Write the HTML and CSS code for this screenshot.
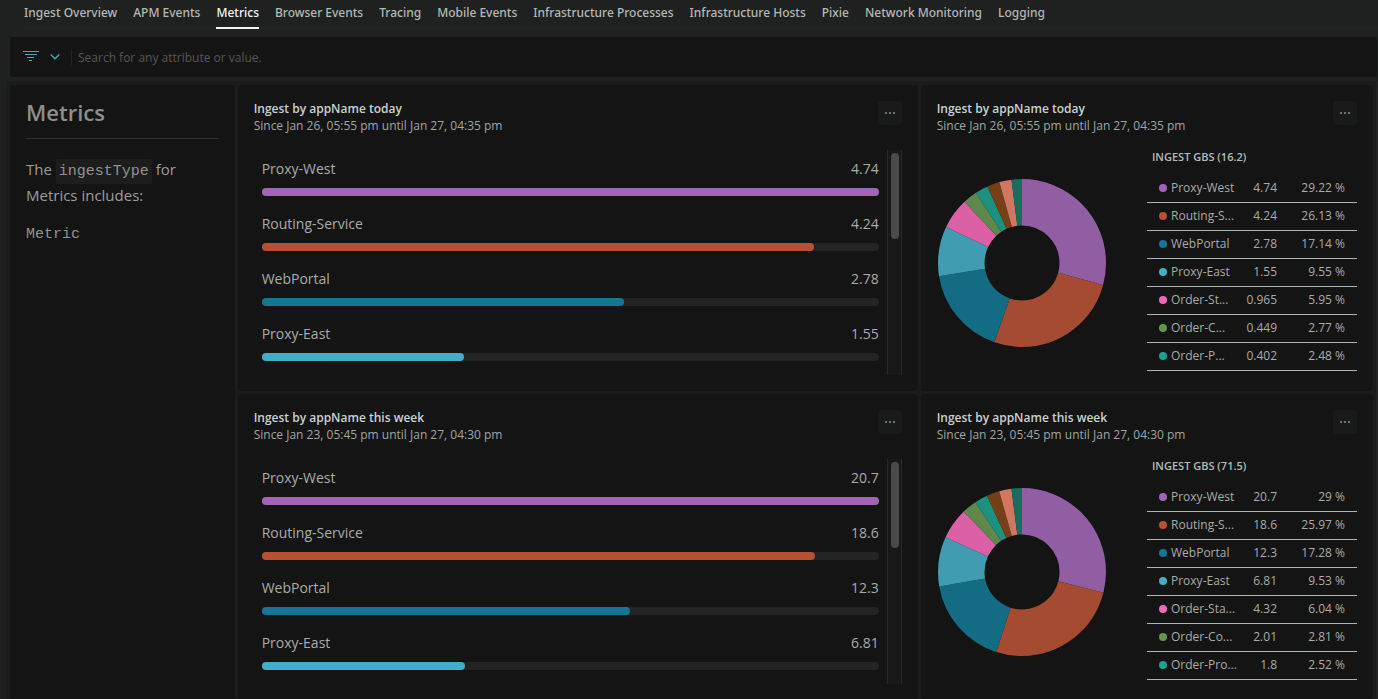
FILE: index.html
```html
<!DOCTYPE html>
<html lang="en">
<head>
<meta charset="utf-8">
<meta name="viewport" content="width=device-width, initial-scale=1">
<title>Metrics</title>
<link rel="stylesheet" href="styles.css">
</head>
<body>
<nav class="tabs" aria-label="Dashboard pages">
  <a class="tab" href="#overview">Ingest Overview</a>
  <a class="tab" href="#apm">APM Events</a>
  <a class="tab tab-active" href="#metrics" aria-current="page">Metrics</a>
  <a class="tab" href="#browser">Browser Events</a>
  <a class="tab" href="#tracing">Tracing</a>
  <a class="tab" href="#mobile">Mobile Events</a>
  <a class="tab" href="#processes">Infrastructure Processes</a>
  <a class="tab" href="#hosts">Infrastructure Hosts</a>
  <a class="tab" href="#pixie">Pixie</a>
  <a class="tab" href="#network">Network Monitoring</a>
  <a class="tab" href="#logging">Logging</a>
</nav>

<div class="search">
  <button class="filter" type="button" aria-label="Filter options">
    <svg width="16" height="12" viewBox="0 0 16 12"><path d="M0 .5h16M2 3.5h12M4 6.5h7M6 9.5h3"/></svg>
    <svg width="10" height="12" viewBox="0 0 10 12"><path class="chevron" d="M.7 3.5 5 7.8l4.3-4.3"/></svg>
  </button>
  <input class="search-input" type="text" aria-label="Search" placeholder="Search for any attribute or value.">
</div>

<main class="board">
  <section class="card notes">
    <h1 class="notes-title">Metrics</h1>
    <p class="notes-text">The <code class="code">ingestType</code> for Metrics includes:</p>
    <p class="notes-type">Metric</p>
  </section>

  <section class="card wide">
    <header class="head">
      <div><h2 class="title">Ingest by appName today</h2><p class="range">Since Jan 26, 05:55 pm until Jan 27, 04:35 pm</p></div>
      <button class="more" type="button" aria-label="More options"><i></i><i></i><i></i></button>
    </header>
    <div class="body">
      <ul class="bars">
        <li class="bar"><span>Proxy-West</span><span>4.74</span><div class="track"><div class="fill purple" style="width:100%"></div></div></li>
        <li class="bar"><span>Routing-Service</span><span>4.24</span><div class="track"><div class="fill orange" style="width:89.5%"></div></div></li>
        <li class="bar"><span>WebPortal</span><span>2.78</span><div class="track"><div class="fill blue" style="width:58.7%"></div></div></li>
        <li class="bar"><span>Proxy-East</span><span>1.55</span><div class="track"><div class="fill cyan" style="width:32.8%"></div></div></li>
      </ul>
      <div class="scroll"><div class="thumb"></div></div>
    </div>
  </section>

  <section class="card side">
    <header class="head">
      <div><h2 class="title">Ingest by appName today</h2><p class="range">Since Jan 26, 05:55 pm until Jan 27, 04:35 pm</p></div>
      <button class="more" type="button" aria-label="More options"><i></i><i></i><i></i></button>
    </header>
    <div class="body pie">
      <svg class="donut" viewBox="0 0 170 170" role="img" aria-label="Ingest share by appName">
        <g transform="rotate(-90 85 85)">
          <circle cx="85" cy="85" r="60.75" pathLength="100" stroke="#915da3" stroke-dasharray="29.22 70.78"/>
          <circle cx="85" cy="85" r="60.75" pathLength="100" stroke="#a54b32" stroke-dasharray="26.13 73.87" stroke-dashoffset="-29.22"/>
          <circle cx="85" cy="85" r="60.75" pathLength="100" stroke="#146c84" stroke-dasharray="17.14 82.86" stroke-dashoffset="-55.35"/>
          <circle cx="85" cy="85" r="60.75" pathLength="100" stroke="#3f9cb1" stroke-dasharray="9.55 90.45" stroke-dashoffset="-72.49"/>
          <circle cx="85" cy="85" r="60.75" pathLength="100" stroke="#db60a6" stroke-dasharray="5.95 94.05" stroke-dashoffset="-82.04"/>
          <circle cx="85" cy="85" r="60.75" pathLength="100" stroke="#5e884c" stroke-dasharray="2.77 97.23" stroke-dashoffset="-87.99"/>
          <circle cx="85" cy="85" r="60.75" pathLength="100" stroke="#1c9180" stroke-dasharray="2.48 97.52" stroke-dashoffset="-90.76"/>
          <circle cx="85" cy="85" r="60.75" pathLength="100" stroke="#773f16" stroke-dasharray="2.4 97.6" stroke-dashoffset="-93.24"/>
          <circle cx="85" cy="85" r="60.75" pathLength="100" stroke="#cf7762" stroke-dasharray="2.34 97.66" stroke-dashoffset="-95.64"/>
          <circle cx="85" cy="85" r="60.75" pathLength="100" stroke="#166e5e" stroke-dasharray="2.02 97.98" stroke-dashoffset="-97.98"/>
        </g>
      </svg>
      <table class="legend">
        <caption>INGEST GBS (16.2)</caption>
        <tbody>
          <tr><th scope="row"><i class="dot purple"></i>Proxy-West</th><td>4.74</td><td>29.22 %</td></tr>
          <tr><th scope="row"><i class="dot orange"></i>Routing-S...</th><td>4.24</td><td>26.13 %</td></tr>
          <tr><th scope="row"><i class="dot blue"></i>WebPortal</th><td>2.78</td><td>17.14 %</td></tr>
          <tr><th scope="row"><i class="dot cyan"></i>Proxy-East</th><td>1.55</td><td>9.55 %</td></tr>
          <tr><th scope="row"><i class="dot pink"></i>Order-St...</th><td>0.965</td><td>5.95 %</td></tr>
          <tr><th scope="row"><i class="dot green"></i>Order-C...</th><td>0.449</td><td>2.77 %</td></tr>
          <tr><th scope="row"><i class="dot teal"></i>Order-P...</th><td>0.402</td><td>2.48 %</td></tr>
        </tbody>
      </table>
    </div>
  </section>

  <section class="card wide">
    <header class="head">
      <div><h2 class="title">Ingest by appName this week</h2><p class="range">Since Jan 23, 05:45 pm until Jan 27, 04:30 pm</p></div>
      <button class="more" type="button" aria-label="More options"><i></i><i></i><i></i></button>
    </header>
    <div class="body">
      <ul class="bars">
        <li class="bar"><span>Proxy-West</span><span>20.7</span><div class="track"><div class="fill purple" style="width:100%"></div></div></li>
        <li class="bar"><span>Routing-Service</span><span>18.6</span><div class="track"><div class="fill orange" style="width:89.7%"></div></div></li>
        <li class="bar"><span>WebPortal</span><span>12.3</span><div class="track"><div class="fill blue" style="width:59.7%"></div></div></li>
        <li class="bar"><span>Proxy-East</span><span>6.81</span><div class="track"><div class="fill cyan" style="width:32.9%"></div></div></li>
      </ul>
      <div class="scroll"><div class="thumb"></div></div>
    </div>
  </section>

  <section class="card side">
    <header class="head">
      <div><h2 class="title">Ingest by appName this week</h2><p class="range">Since Jan 23, 05:45 pm until Jan 27, 04:30 pm</p></div>
      <button class="more" type="button" aria-label="More options"><i></i><i></i><i></i></button>
    </header>
    <div class="body pie">
      <svg class="donut" viewBox="0 0 170 170" role="img" aria-label="Ingest share by appName">
        <g transform="rotate(-90 85 85)">
          <circle cx="85" cy="85" r="60.75" pathLength="100" stroke="#915da3" stroke-dasharray="29 71"/>
          <circle cx="85" cy="85" r="60.75" pathLength="100" stroke="#a54b32" stroke-dasharray="25.97 74.03" stroke-dashoffset="-29"/>
          <circle cx="85" cy="85" r="60.75" pathLength="100" stroke="#146c84" stroke-dasharray="17.28 82.72" stroke-dashoffset="-54.97"/>
          <circle cx="85" cy="85" r="60.75" pathLength="100" stroke="#3f9cb1" stroke-dasharray="9.53 90.47" stroke-dashoffset="-72.25"/>
          <circle cx="85" cy="85" r="60.75" pathLength="100" stroke="#db60a6" stroke-dasharray="6.04 93.96" stroke-dashoffset="-81.78"/>
          <circle cx="85" cy="85" r="60.75" pathLength="100" stroke="#5e884c" stroke-dasharray="2.81 97.19" stroke-dashoffset="-87.82"/>
          <circle cx="85" cy="85" r="60.75" pathLength="100" stroke="#1c9180" stroke-dasharray="2.52 97.48" stroke-dashoffset="-90.63"/>
          <circle cx="85" cy="85" r="60.75" pathLength="100" stroke="#773f16" stroke-dasharray="2.45 97.55" stroke-dashoffset="-93.15"/>
          <circle cx="85" cy="85" r="60.75" pathLength="100" stroke="#cf7762" stroke-dasharray="2.38 97.62" stroke-dashoffset="-95.6"/>
          <circle cx="85" cy="85" r="60.75" pathLength="100" stroke="#166e5e" stroke-dasharray="2.02 97.98" stroke-dashoffset="-97.98"/>
        </g>
      </svg>
      <table class="legend">
        <caption>INGEST GBS (71.5)</caption>
        <tbody>
          <tr><th scope="row"><i class="dot purple"></i>Proxy-West</th><td>20.7</td><td>29 %</td></tr>
          <tr><th scope="row"><i class="dot orange"></i>Routing-S...</th><td>18.6</td><td>25.97 %</td></tr>
          <tr><th scope="row"><i class="dot blue"></i>WebPortal</th><td>12.3</td><td>17.28 %</td></tr>
          <tr><th scope="row"><i class="dot cyan"></i>Proxy-East</th><td>6.81</td><td>9.53 %</td></tr>
          <tr><th scope="row"><i class="dot pink"></i>Order-Sta...</th><td>4.32</td><td>6.04 %</td></tr>
          <tr><th scope="row"><i class="dot green"></i>Order-Co...</th><td>2.01</td><td>2.81 %</td></tr>
          <tr><th scope="row"><i class="dot teal"></i>Order-Pro...</th><td>1.8</td><td>2.52 %</td></tr>
        </tbody>
      </table>
    </div>
  </section>
</main>
</body>
</html>
```

FILE: styles.css
```css
* { box-sizing: border-box; margin: 0; padding: 0; }

html { background: #1f2120; }

body {
  height: 100vh;
  overflow: hidden;
  color: #aaabaa;
  font: 12px/17px "Open Sans", "Noto Sans", sans-serif;
}

.tabs {
  display: flex;
  gap: 16px;
  margin-left: 24px;
  padding-top: 4px;
  border-bottom: 1px solid #222423;
  font-family: "Noto Sans", "Open Sans", sans-serif;
  font-weight: 500;
}

.tab {
  height: 25px;
  margin-bottom: -1px;
  color: #b5b8b7;
  text-decoration: none;
  white-space: nowrap;
}

.tab-active { color: #f1f4f4; border-bottom: 2px solid #f1f4f4; }

.search {
  display: flex;
  align-items: center;
  height: 40px;
  margin: 8px 1px 0 10px;
  border-radius: 2px 0 0 2px;
  background: #141414;
}

.filter {
  display: flex;
  align-items: center;
  gap: 11px;
  height: 16px;
  padding: 0 11px 0 13px;
  border: 0;
  border-right: 1px solid #232525;
  background: none;
}

.filter path { fill: none; stroke: #45abb8; }
.filter .chevron { stroke-width: 1.3; }

.search-input {
  flex: 1;
  height: 100%;
  padding-left: 6px;
  border: 0;
  outline: 0;
  background: none;
  color: #aaabaa;
  font: inherit;
}

.search-input::placeholder { color: #555757; }

.board {
  display: grid;
  grid-template-columns: repeat(12, 1fr);
  gap: 3px;
  margin: 4px 0 0 6px;
  padding: 4px;
  border-right: 1px solid #252525;
  background: #1a1c1b;
}

.card {
  min-width: 0;
  padding: 15px 16px 16px;
  border-radius: 4px;
  background: #141414;
}

.notes { grid-column: span 2; grid-row: span 2; color: #9c9c9c; font-size: 15px; line-height: 26px; }
.wide { grid-column: span 6; }
.side { grid-column: span 4; }

.notes-title {
  padding-bottom: 14px;
  border-bottom: 1px solid #323232;
  color: #8e8e8e;
  font-size: 22px;
  font-weight: 600;
  line-height: 24px;
}

.notes-text { margin: 17px 0 14px; }

.code, .notes-type { color: #929292; font-family: "Courier New", "Liberation Mono", monospace; font-size: 15px; }
.code { padding: 4px 3px; border-radius: 2px; background: #1d1d1d; line-height: 17px; }
.notes-type { line-height: 26px; }

.head { display: flex; justify-content: space-between; align-items: flex-end; }
.title { color: #c9d2d2; font-size: 12px; font-weight: 600; }
.range { color: #9ea6a6; }

.more {
  display: flex;
  justify-content: center;
  align-items: center;
  gap: 2px;
  width: 24px;
  height: 24px;
  margin-bottom: 9px;
  border: 0;
  border-radius: 4px;
  background: #191b1a;
}

.more i { width: 2px; height: 2px; background: #6d7070; }

.body { display: flex; height: 225px; margin-top: 16px; overflow: hidden; }

.bars { flex: 1; padding: 9px 8px 0; list-style: none; font-size: 14px; line-height: 20px; }

.bar {
  display: flex;
  flex-wrap: wrap;
  justify-content: space-between;
  row-gap: 9px;
  margin-bottom: 18px;
}

.track { width: 100%; height: 8px; border-radius: 4px; background: #242424; }
.fill { height: 8px; border-radius: 4px; }

.scroll {
  width: 15px;
  padding: 3px;
  border: solid #292929;
  border-width: 0 1px;
  background: #181818;
}

.thumb { width: 8px; height: 86px; border-radius: 4px; background: #4a4a4a; }

.purple { background: #a364b7; }
.orange { background: #b65134; }
.blue { background: #147594; }
.cyan { background: #43acc6; }
.pink { background: #f268b9; }
.green { background: #65954f; }
.teal { background: #1ba290; }

.pie { justify-content: space-between; align-items: center; }
.donut { width: 170px; height: 170px; }
.donut circle { fill: none; stroke-width: 46.5; }

.legend {
  align-self: flex-start;
  width: 210px;
  border-collapse: separate;
  border-spacing: 0;
  table-layout: fixed;
}

.legend caption {
  height: 25px;
  padding: 0 5px;
  color: #b4bcbb;
  font-size: 11px;
  font-weight: 600;
  line-height: 14px;
  text-align: left;
}

.legend th, .legend td {
  height: 28px;
  padding-bottom: 2px;
  border-bottom: 1px solid #adb5b3;
  font-weight: 400;
  text-align: right;
  white-space: nowrap;
}

.legend th { width: 92px; padding-left: 12px; text-align: left; }
.legend td { width: 38px; }
.legend td:last-child { width: 80px; padding-right: 12px; }

.dot { display: inline-block; width: 8px; height: 8px; margin-right: 4px; border-radius: 4px; }
```
